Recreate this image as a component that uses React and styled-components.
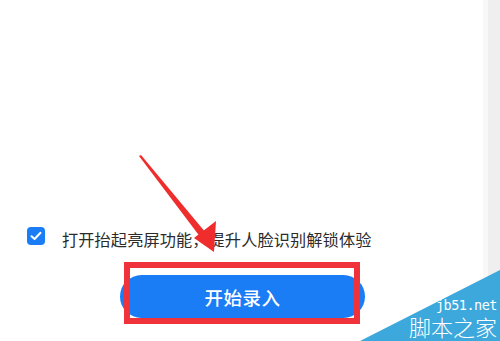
import styled, { createGlobalStyle } from 'styled-components';

const GlobalStyle = createGlobalStyle`
  html, body {
    margin: 0;
    padding: 0;
    background: #ffffff;
    overflow: hidden;
  }
  body {
    font-family: "Noto Sans CJK SC", "Noto Sans", sans-serif;
  }
`;

const App = () => {
  return (
    <Page>
      <GlobalStyle />
      <Screen>
        <OptionRow>
          <CheckBox>
            <svg width="12" height="10" viewBox="0 0 12 10">
              <path d="M1.5 5.2 L4.6 8 L10.5 1.8" fill="none" stroke="#fff" strokeWidth="2" strokeLinecap="round" strokeLinejoin="round" />
            </svg>
          </CheckBox>
          <OptionText>打开抬起亮屏功能，提升人脸识别解锁体验</OptionText>
        </OptionRow>
        <ButtonWrap>
          <StartButton>开始录入</StartButton>
          <Highlight />
        </ButtonWrap>
      </Screen>
      <Strip />
      <Arrow width="500" height="341" viewBox="0 0 500 341">
        <polygon points="139,156 141,155 206,233 201,238" fill="#ef2d2d" />
        <polygon points="214,252 194,238 216,221" fill="#ef2d2d" />
      </Arrow>
      <Watermark>
        <Triangle />
        <Site>jb51.net</Site>
        <Brand>脚本之家</Brand>
      </Watermark>
    </Page>
  );
};

const Page = styled.div`
  position: relative;
  display: flex;
  width: 500px;
  height: 341px;
  overflow: hidden;
  background: #ffffff;
`;

const Screen = styled.div`
  flex: 1;
  display: flex;
  flex-direction: column;
  justify-content: flex-end;
  padding-bottom: 23px;
  border-right: 5px solid #f8f8f8;
`;

const Strip = styled.div`
  width: 12px;
  background: #efefef;
`;

const OptionRow = styled.div`
  display: flex;
  align-items: center;
  gap: 17px;
  margin-left: 27px;
  margin-bottom: 26px;
`;

const CheckBox = styled.span`
  display: flex;
  align-items: center;
  justify-content: center;
  width: 18px;
  height: 18px;
  border-radius: 4px;
  background: #1a7df6;
`;

const OptionText = styled.span`
  font-size: 16.2px;
  line-height: 20px;
  color: #2b2b2b;
  margin-top: 6px;
  letter-spacing: 0.1px;
`;

const ButtonWrap = styled.div`
  position: relative;
  margin-left: 120px;
  width: 245px;
`;

const StartButton = styled.div`
  display: flex;
  align-items: center;
  justify-content: center;
  height: 43px;
  border-radius: 22px;
  background: #1a7df6;
  color: #ffffff;
  font-size: 18.5px;
  font-weight: 500;
  letter-spacing: 0.5px;
`;

const Highlight = styled.div`
  position: absolute;
  left: 4px;
  top: -13px;
  width: 236px;
  height: 62px;
  box-sizing: border-box;
  border: 6px solid #f0333a;
`;

const Arrow = styled.svg`
  position: absolute;
  left: 0;
  top: 0;
  pointer-events: none;
`;

const Watermark = styled.div`
  position: absolute;
  right: 0;
  bottom: 0;
  width: 140px;
  height: 71px;
  display: flex;
  flex-direction: column;
  align-items: flex-end;
  justify-content: flex-end;
  padding: 0 3px 2px 0;
  box-sizing: border-box;
`;

const Triangle = styled.div`
  position: absolute;
  inset: 0;
  background: #3ca8dc;
  clip-path: polygon(100% 0, 100% 100%, 0 100%);
`;

const Site = styled.div`
  position: relative;
  font-family: "DejaVu Sans Mono", "Liberation Mono", monospace;
  font-size: 13.5px;
  line-height: 15px;
  color: #ffffff;
  letter-spacing: -0.5px;
`;

const Brand = styled.div`
  position: relative;
  font-size: 22px;
  line-height: 26px;
  color: #ffffff;
  font-weight: 300;
`;

export default App;
